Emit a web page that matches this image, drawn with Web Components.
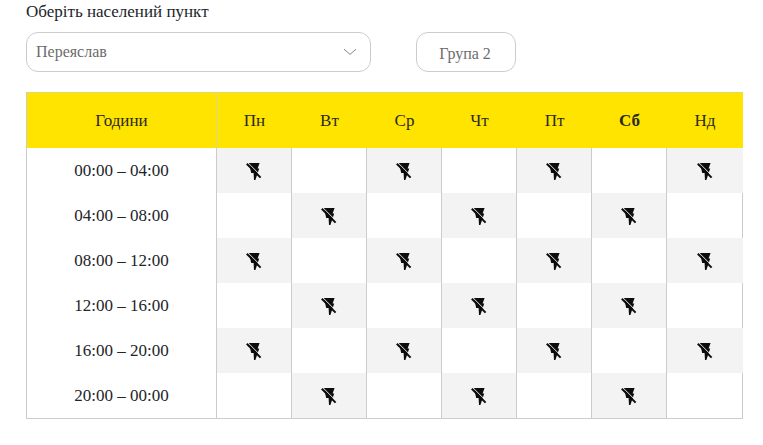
<!DOCTYPE html>
<html lang="uk">
<head>
<meta charset="utf-8">
<title>Графік</title>
<style>
    html, body { margin: 0; background: #fff; }
    body { font: 17px "Liberation Serif", "Times New Roman", serif; color: #212529; }
</style>
</head>
<body>
<schedule-page></schedule-page>
<script>
class TownSelect extends HTMLElement {
    constructor() {
        super();
        this.attachShadow({ mode: 'open' });
    }

    connectedCallback() {
        this.shadowRoot.innerHTML = `
            <style>
                :host {
                    display: flex;
                    align-items: center;
                    justify-content: space-between;
                    box-sizing: border-box;
                    width: 345px;
                    height: 40px;
                    padding: 0 13px 0 9px;
                    border: 1px solid #ccc;
                    border-radius: 12px;
                    color: #6c6c6c;
                    font-size: 16px;
                }
                svg { display: block; }
            </style>
            <slot></slot>
            <svg width="14" height="8" viewBox="0 0 14 8" fill="none" stroke="#888" stroke-width="1">
                <path d="M1 1.2 7 6.4 13 1.2"/>
            </svg>
        `;
    }
}

class GroupBadge extends HTMLElement {
    constructor() {
        super();
        this.attachShadow({ mode: 'open' });
    }

    connectedCallback() {
        this.shadowRoot.innerHTML = `
            <style>
                :host {
                    display: flex;
                    align-items: center;
                    justify-content: center;
                    box-sizing: border-box;
                    width: 100px;
                    height: 40px;
                    padding: 3px 2px 0 0;
                    border: 1px solid #ccc;
                    border-radius: 12px;
                    color: #6c6c6c;
                    font-size: 16px;
                }
            </style>
            <slot></slot>
        `;
    }
}

class OutageIcon extends HTMLElement {
    constructor() {
        super();
        this.attachShadow({ mode: 'open' });
    }

    connectedCallback() {
        this.shadowRoot.innerHTML = `
            <style>
                :host { display: block; width: 18px; height: 18px; }
                svg { display: block; }
            </style>
            <svg width="18" height="18" viewBox="0 0 18 18">
                <path fill="#0c0c0c" d="M4 1H14.6L12.6 6.4H14.2L10.4 17.9H9L8.6 11H6.2z"/>
                <path fill="none" stroke="#f3f3f3" stroke-width="1" d="M3.6 1.4 16.4 14.2"/>
                <path fill="none" stroke="#0c0c0c" stroke-width="2" d="M1.8 1.8 15.6 15.6"/>
            </svg>
        `;
    }
}

class ScheduleTable extends HTMLElement {
    constructor() {
        super();
        this.attachShadow({ mode: 'open' });
    }

    connectedCallback() {
        const days = ['Пн', 'Вт', 'Ср', 'Чт', 'Пт', 'Сб', 'Нд'];
        const hours = ['00:00 – 04:00', '04:00 – 08:00', '08:00 – 12:00', '12:00 – 16:00', '16:00 – 20:00', '20:00 – 00:00'];

        const head = days.map((d) => `<div class="head ${d === 'Сб' ? 'today' : ''}">${d}</div>`).join('');
        // Outages alternate: every other cell, shifted by one on each row
        const rows = hours.map((h, r) => {
            const cells = days.map((d, c) => {
                const off = (r + c) % 2 === 0;
                return `<div class="cell ${off ? 'off' : ''}">${off ? '<outage-icon></outage-icon>' : ''}</div>`;
            }).join('');
            return `<div class="time">${h}</div>${cells}`;
        }).join('');

        this.shadowRoot.innerHTML = `
            <style>
                :host {
                    display: grid;
                    grid-template-columns: 190px repeat(6, 75px) 76px;
                    grid-template-rows: 56px repeat(6, 45px);
                    box-sizing: border-box;
                    width: 717px;
                    border: solid #ccc;
                    border-width: 0 1px 1px 1px;
                }
                div { display: flex; align-items: center; justify-content: center; box-sizing: border-box; }
                .head, .hours { background: #ffe400; border-top: 1px solid #e3d66a; color: #2a2a1a; padding-top: 1px; }
                .hours { border-right: 1px solid #d9d49a; }
                .today { font-weight: bold; }
                .time { border-right: 1px solid #ccc; }
                .cell { border-right: 1px solid #ccc; }
                .cell:nth-child(8n+1) { border-right: 0; }
                .off { background: #f3f3f3; }
            </style>
            <div class="hours">Години</div>${head}${rows}
        `;
    }
}

class SchedulePage extends HTMLElement {
    constructor() {
        super();
        this.attachShadow({ mode: 'open' });
    }

    connectedCallback() {
        this.shadowRoot.innerHTML = `
            <style>
                :host {
                    display: flex;
                    flex-direction: column;
                    box-sizing: border-box;
                    width: 763px;
                    height: 445px;
                    padding: 3px 0 0 26px;
                }
                .label { height: 29px; line-height: 18px; }
                .controls { display: flex; gap: 45px; margin-bottom: 20px; }
            </style>
            <div class="label">Оберіть населений пункт</div>
            <div class="controls">
                <town-select>Переяслав</town-select>
                <group-badge>Група 2</group-badge>
            </div>
            <schedule-table></schedule-table>
        `;
    }
}

customElements.define('town-select', TownSelect);
customElements.define('group-badge', GroupBadge);
customElements.define('outage-icon', OutageIcon);
customElements.define('schedule-table', ScheduleTable);
customElements.define('schedule-page', SchedulePage);
</script>
</body>
</html>
